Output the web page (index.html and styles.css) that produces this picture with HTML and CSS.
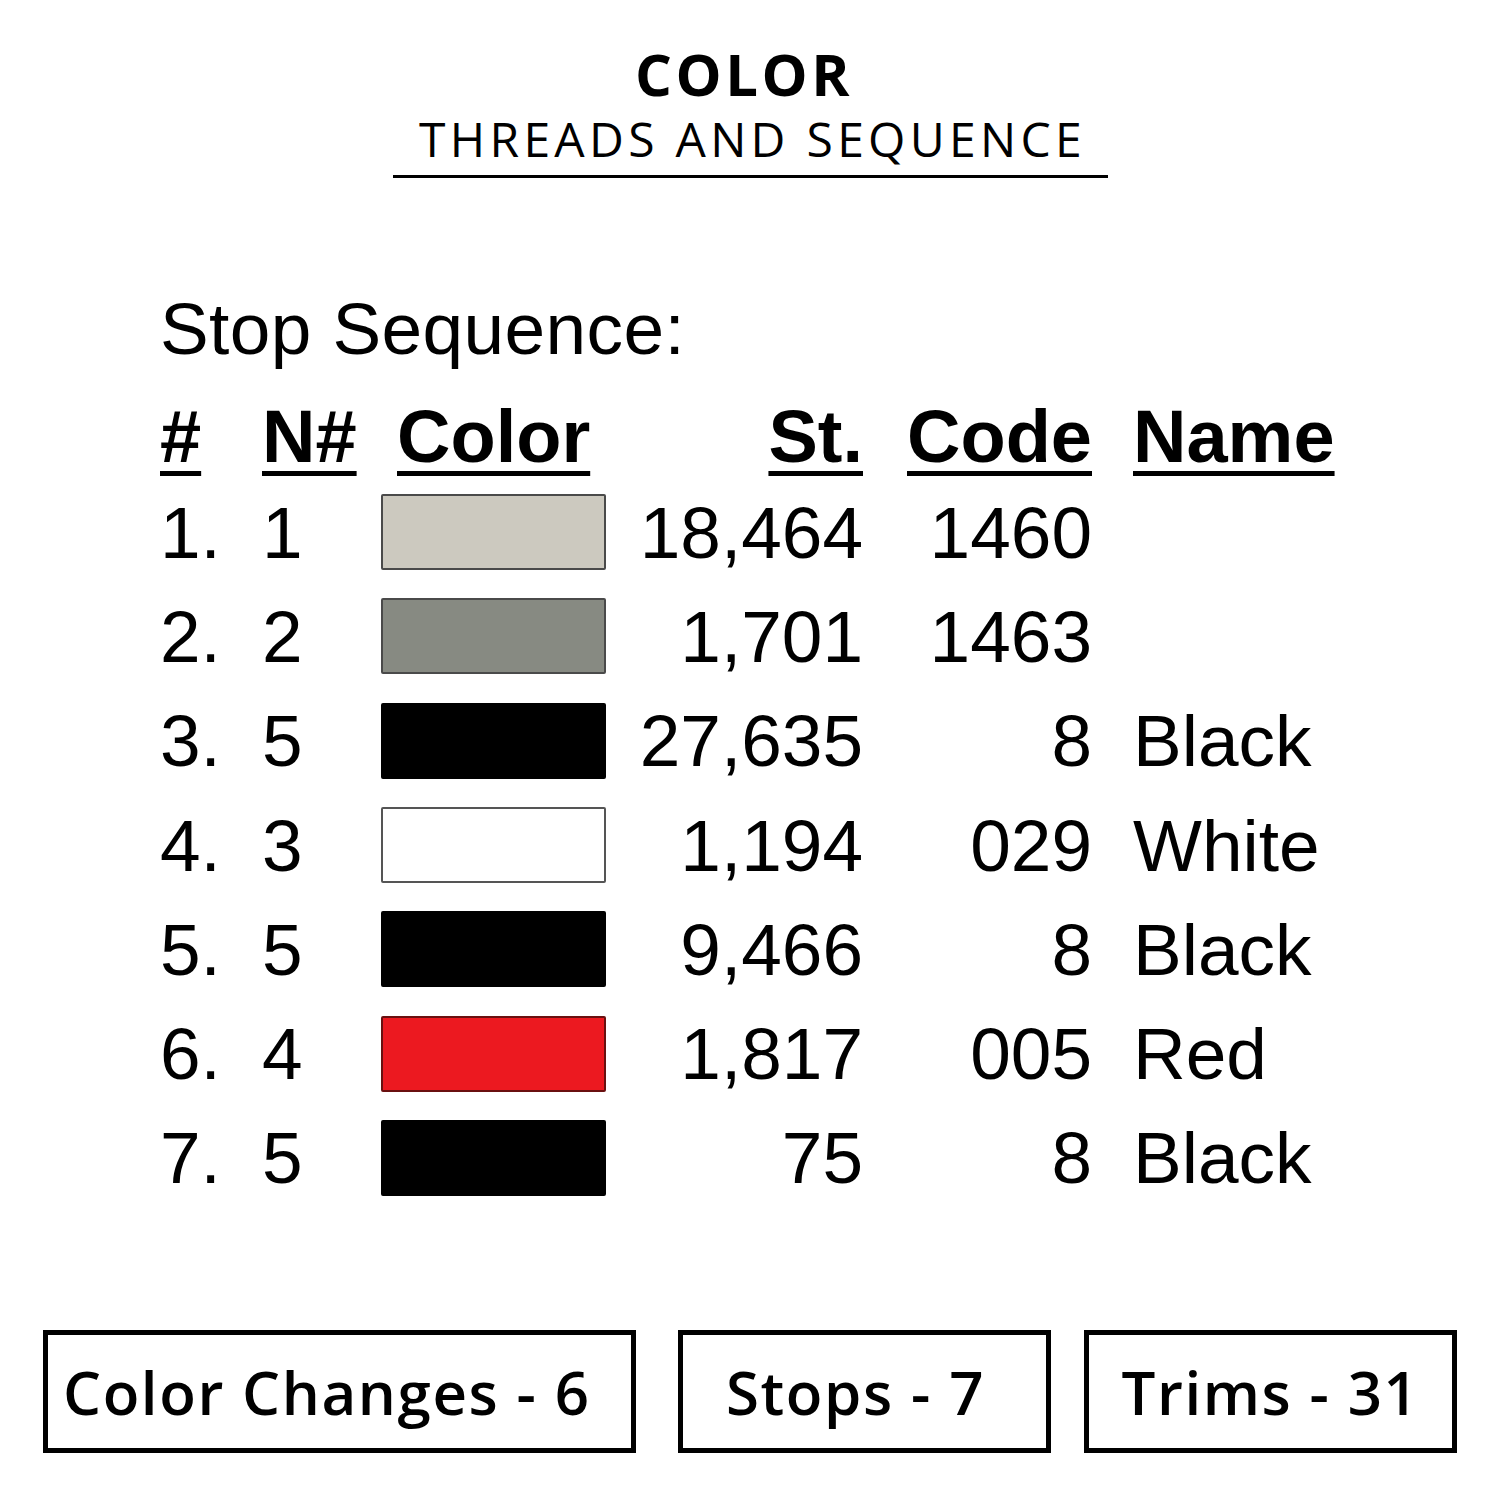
FILE: index.html
```html
<!DOCTYPE html>
<html>
<head>
<meta charset="utf-8">
<link rel="stylesheet" href="styles.css">
</head>
<body>
<div class="page">
  <header class="head">
    <div class="title">COLOR</div>
    <div class="subtitle">THREADS AND SEQUENCE</div>
  </header>

  <section class="seq">
    <div class="seq-title">Stop Sequence:</div>
    <div class="grid">
      <div class="h c1"><span>#</span></div>
      <div class="h c2"><span>N#</span></div>
      <div class="h c3"><span>Color</span></div>
      <div class="h c4"><span>St.</span></div>
      <div class="h c5"><span>Code</span></div>
      <div class="h c6"><span>Name</span></div>

      <div class="c1">1.</div><div class="c2">1</div><div class="c3"><div class="sw sw-beige"></div></div><div class="c4">18,464</div><div class="c5">1460</div><div class="c6"></div>
      <div class="c1">2.</div><div class="c2">2</div><div class="c3"><div class="sw sw-gray"></div></div><div class="c4">1,701</div><div class="c5">1463</div><div class="c6"></div>
      <div class="c1">3.</div><div class="c2">5</div><div class="c3"><div class="sw sw-black"></div></div><div class="c4">27,635</div><div class="c5">8</div><div class="c6">Black</div>
      <div class="c1">4.</div><div class="c2">3</div><div class="c3"><div class="sw sw-white"></div></div><div class="c4">1,194</div><div class="c5">029</div><div class="c6">White</div>
      <div class="c1">5.</div><div class="c2">5</div><div class="c3"><div class="sw sw-black"></div></div><div class="c4">9,466</div><div class="c5">8</div><div class="c6">Black</div>
      <div class="c1">6.</div><div class="c2">4</div><div class="c3"><div class="sw sw-red"></div></div><div class="c4">1,817</div><div class="c5">005</div><div class="c6">Red</div>
      <div class="c1">7.</div><div class="c2">5</div><div class="c3"><div class="sw sw-black"></div></div><div class="c4">75</div><div class="c5">8</div><div class="c6">Black</div>
    </div>
  </section>

  <footer class="stats">
    <div class="box box-wide">Color Changes - 6</div>
    <div class="box box-mid">Stops - 7</div>
    <div class="box box-last">Trims - 31</div>
  </footer>
</div>
</body>
</html>
```

FILE: styles.css
```css
html, body {
  margin: 0;
  padding: 0;
  background: #fff;
}
.page {
  width: 1500px;
  height: 1500px;
  color: #000;
  display: flex;
  flex-direction: column;
}
.head {
  display: flex;
  flex-direction: column;
  align-items: center;
  padding-top: 44px;
}
.title {
  font-family: "Open Sans", sans-serif;
  font-weight: 700;
  font-size: 58px;
  line-height: 60px;
  letter-spacing: 3.5px;
  margin-left: -12px;
}
.subtitle {
  font-family: "Open Sans", sans-serif;
  font-weight: 400;
  font-size: 48px;
  line-height: 54px;
  letter-spacing: 4.3px;
  text-indent: 4px;
  width: 715px;
  text-align: center;
  border-bottom: 3px solid #000;
  padding-bottom: 9px;
  margin-top: 8px;
  margin-left: 1px;
}
.seq {
  padding-left: 160px;
  margin-top: 111px;
  font-family: "Liberation Sans", Arial, sans-serif;
}
.seq-title {
  font-size: 73px;
  line-height: 80px;
  letter-spacing: 0.4px;
}
.grid {
  margin-top: 23px;
  display: grid;
  grid-template-columns: 102px 119px 225px 257px 229px 260px;
  grid-auto-rows: 104.3px;
  grid-template-rows: 88px;
  font-size: 73px;
  align-items: center;
}
.h {
  font-weight: 700;
  font-size: 74px;
}
.h span {
  text-decoration: underline;
  text-decoration-thickness: 5px;
  text-underline-offset: 9px;
}
.c3.h { padding-left: 16px; }
.c4, .c5 { text-align: right; }
.c6 { padding-left: 41px; }
.sw {
  width: 225px;
  height: 76px;
  box-sizing: border-box;
  border: 2px solid #4a4a4a;
  border-radius: 2px;
}
.sw-beige { background: #ccc9bf; }
.sw-gray { background: #878a82; }
.sw-black { background: #000; border-color: #000; }
.sw-white { background: #fff; border-color: #555; }
.sw-red { background: #ec1920; border-color: #6a1010; }

.stats {
  margin-top: auto;
  margin-bottom: 47px;
  display: flex;
  padding-left: 43px;
}
.box {
  height: 123px;
  box-sizing: border-box;
  border: 5px solid #000;
  display: flex;
  align-items: center;
  font-family: "Open Sans", sans-serif;
  font-weight: 600;
  font-size: 60px;
  letter-spacing: 1.6px;
}
.box-wide { width: 593px; padding-left: 15px; }
.box-mid { width: 373px; margin-left: 42px; justify-content: center; padding-right: 18px; }
.box-last { width: 373px; margin-left: 33px; justify-content: center; }
```
